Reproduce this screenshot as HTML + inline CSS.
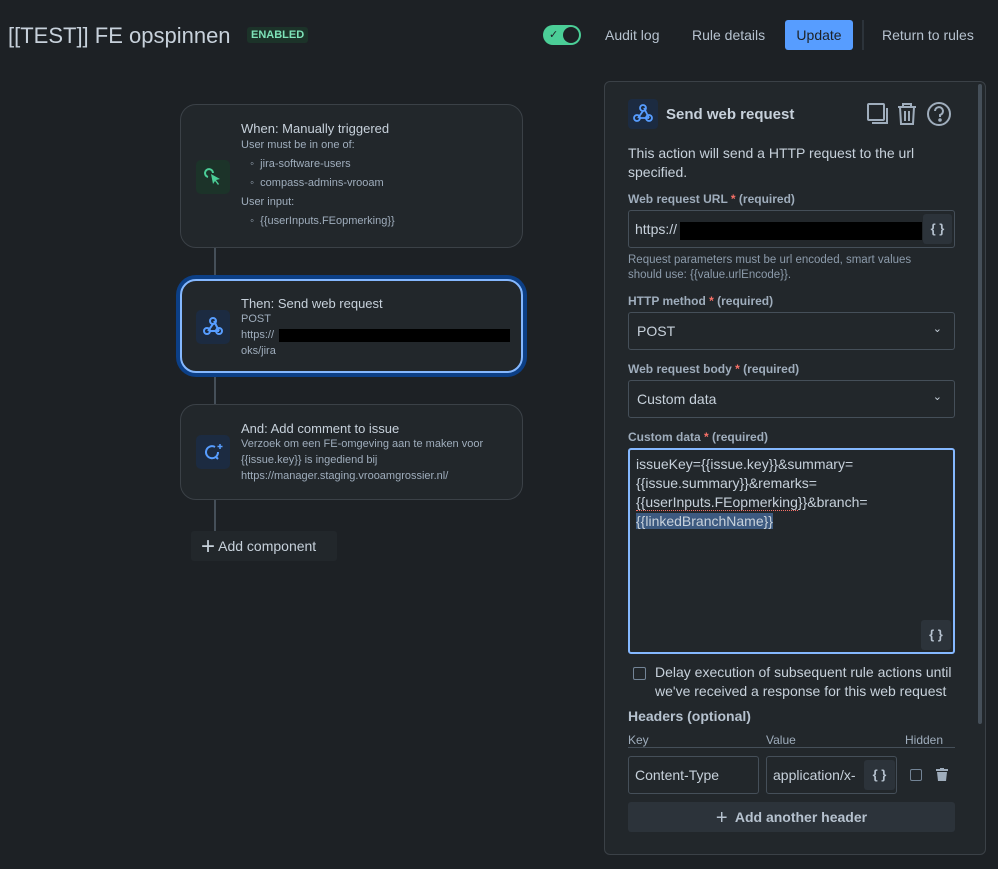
<!DOCTYPE html>
<html><head><meta charset="utf-8"><style>
*{box-sizing:border-box;margin:0;padding:0}
body{width:998px;height:869px;background:#1d2125;font-family:"Liberation Sans",sans-serif;color:#b6c2cf;position:relative;overflow:hidden}
.a{position:absolute}
.t{font-size:13px;color:#b6c2cf}
.card{position:absolute;left:180px;width:343px;border:1px solid #3b4147;border-radius:16px;background:#22272b}
.ic{position:absolute;width:34px;height:34px;border-radius:5px}
.ct{position:absolute;left:60px;font-size:13px;color:#c7d1db}
.sm{font-size:11px;color:#9fadbc;line-height:19px}
.lbl{position:absolute;left:628px;font-size:12px;font-weight:bold;color:#9fadbc}
.lbl i{color:#f87168;font-style:normal}
.inp{position:absolute;border:1px solid #454f59;border-radius:3px;background:#22272b;font-size:14px;color:#c7d1db}
.br{position:absolute;background:#2c333a;border-radius:3px;color:#b6c2cf;font-size:13px;font-weight:bold;text-align:center}
</style></head><body>
<div class="a" style="left:8px;top:23px;font-size:22px;color:#c7d1db">[[TEST]] FE opspinnen</div>
<div class="a" style="left:247px;top:27px;height:16px;padding:0 4px;background:#1c3329;border-radius:3px;color:#7ee2b8;font-size:11px;font-weight:bold;line-height:16px">ENABLED</div>
<div class="a" style="left:543px;top:25px;width:38px;height:20px;border-radius:10px;background:#4bce97"><div class="a" style="left:20px;top:2px;width:16px;height:16px;border-radius:8px;background:#1d2125"></div><div class="a" style="left:6px;top:3px;font-size:11px;color:#1d2125">✓</div></div>
<div class="a t" style="left:605px;top:27px;font-size:14px;color:#b6c2cf">Audit log</div>
<div class="a t" style="left:692px;top:27px;font-size:14px">Rule details</div>
<div class="a" style="left:785px;top:20px;width:68px;height:30px;background:#579dff;border-radius:3px;color:#1d2125;font-size:14px;text-align:center;line-height:30px">Update</div>
<div class="a" style="left:862px;top:20px;width:2px;height:30px;background:#2c333a"></div>
<div class="a t" style="left:882px;top:27px;font-size:14px">Return to rules</div>

<div class="a" style="left:214px;top:248px;width:2px;height:284px;background:#454f59"></div>
<div class="card" style="top:104px;height:144px">
<div class="ic" style="left:15px;top:55px;background:#1c3329"><svg width="34" height="34" viewBox="0 0 34 34"><path d="M12 17a4 4 0 1 1 5-4" stroke="#4bce97" stroke-width="2" fill="none"/><path d="M15 14l9 5-4 1 3 4-1 1-3-4-2 3z" fill="#4bce97"/></svg></div>
<div class="ct" style="top:16px">When: Manually triggered</div>
<div class="ct sm" style="top:31px">User must be in one of:<br>&nbsp;&nbsp;&nbsp;◦&nbsp;&nbsp;jira-software-users<br>&nbsp;&nbsp;&nbsp;◦&nbsp;&nbsp;compass-admins-vrooam<br>User input:<br>&nbsp;&nbsp;&nbsp;◦&nbsp;&nbsp;{{userInputs.FEopmerking}}</div>
</div>
<div class="card" style="top:279px;height:94px;border:2px solid #85b8ff;box-shadow:0 0 0 4px #0c3f86"><div class="ic" style="left:14px;top:29px;background:#1c2b41"><svg width="34" height="34" viewBox="0 0 34 34" fill="none" stroke="#579dff" stroke-width="2"><circle cx="17" cy="11" r="3"/><circle cx="11" cy="21" r="3"/><circle cx="23" cy="21" r="3"/><path d="M17 14l-5 7M14 21h9M18 11l5 10"/></svg></div>
<div class="ct" style="top:15px;left:59px">Then: Send web request</div>
<div class="ct sm" style="top:30px;left:59px;line-height:16px">POST<br>https://<br>oks/jira</div>
<div class="a" style="left:97px;top:48px;width:231px;height:13px;background:#000"></div></div>
<div class="card" style="top:404px;height:96px"><div class="ic" style="left:15px;top:30px;background:#1c2b41"><svg width="34" height="34" viewBox="0 0 34 34" fill="none" stroke="#579dff" stroke-width="2"><path d="M22 17a6 6 0 1 1-3-5M20 22l2 2"/><path d="M24 9v5M21.5 11.5h5" stroke-width="1.5"/></svg></div>
<div class="ct" style="top:16px">And: Add comment to issue</div>
<div class="ct sm" style="top:31px;line-height:16px">Verzoek om een FE-omgeving aan te maken voor<br>{{issue.key}} is ingediend bij<br>https://manager.staging.vrooamgrossier.nl/</div></div>
<div class="a" style="left:191px;top:531px;width:146px;height:30px;background:#22272b;border-radius:3px;font-size:14px;color:#c7d1db;line-height:30px;padding-left:10px"><span style="font-size:24px;vertical-align:-3px;font-weight:300">+</span> Add component</div>

<div class="a" style="left:604px;top:81px;width:382px;height:774px;border:1px solid #3b4147;border-radius:6px;background:#22272b"></div>
<div class="a" style="left:978px;top:84px;width:4px;height:640px;background:#454f59;border-radius:2px"></div>
<div class="a" style="left:628px;top:99px;width:30px;height:30px;background:#1c2b41;border-radius:4px"><svg width="30" height="30" viewBox="0 0 30 30" fill="none" stroke="#579dff" stroke-width="1.8"><circle cx="15" cy="9" r="3"/><circle cx="9" cy="19" r="3"/><circle cx="21" cy="19" r="3"/><path d="M15 12l-5 7M12 19h9M16 9l5 10"/></svg></div>
<div class="a" style="left:666px;top:106px;font-size:15px;font-weight:bold;color:#c7d1db">Send web request</div>
<svg class="a" style="left:866px;top:101px" width="90" height="26" fill="none" stroke="#9fadbc" stroke-width="2"><rect x="2" y="3" width="16" height="16" rx="1"/><path d="M6 22h15V7"/><path d="M32 6h18M37 6V3h8v3M34 6l1 17h12l1-17M39 10v10M43 10v10"/><circle cx="73" cy="13" r="11"/><path d="M69 10a4 4 0 1 1 5 4v2"/><circle cx="74" cy="19" r=".8" fill="#9fadbc"/></svg>
<div class="a" style="left:628px;top:144px;font-size:14px;line-height:19px;color:#c7d1db;width:320px">This action will send a HTTP request to the url specified.</div>
<div class="lbl" style="top:192px">Web request URL <i>*</i> (required)</div>
<div class="inp" style="left:628px;top:210px;width:327px;height:38px;padding:10px 6px">https://</div>
<div class="a" style="left:680px;top:222px;width:242px;height:18px;background:#000"></div>
<div class="br" style="left:923px;top:214px;width:29px;height:30px;line-height:30px">{ }</div>
<div class="a" style="left:628px;top:253px;font-size:11.5px;line-height:15px;color:#8c9bab;width:310px">Request parameters must be url encoded, smart values should use: {{value.urlEncode}}.</div>
<div class="lbl" style="top:294px">HTTP method <i>*</i> (required)</div>
<div class="inp" style="left:628px;top:312px;width:327px;height:38px;padding:10px 8px">POST<span style="position:absolute;right:12px;top:9px;font-size:11px">⌄</span></div>
<div class="lbl" style="top:362px">Web request body <i>*</i> (required)</div>
<div class="inp" style="left:628px;top:380px;width:327px;height:38px;padding:10px 8px">Custom data<span style="position:absolute;right:12px;top:9px;font-size:11px">⌄</span></div>
<div class="lbl" style="top:430px">Custom data <i>*</i> (required)</div>
<div class="inp" style="left:628px;top:448px;width:327px;height:206px;border:2px solid #85b8ff;padding:5px 6px;line-height:19px">issueKey={{issue.key}}&amp;summary=<br>{{issue.summary}}&amp;remarks=<br><span style="border-bottom:1px dotted #f87168">{{userInputs.FEopmerking</span>}}&amp;branch=<br><span style="background:#3d5a80">{{linkedBranchName}}</span></div>
<div class="br" style="left:921px;top:620px;width:30px;height:30px;line-height:30px">{ }</div>
<div class="a" style="left:633px;top:667px;width:13px;height:13px;border:1.5px solid #738496;border-radius:2px"></div>
<div class="a" style="left:655px;top:663px;font-size:14px;line-height:19px;color:#c7d1db">Delay execution of subsequent rule actions until<br>we've received a response for this web request</div>
<div class="a" style="left:628px;top:708px;font-size:14px;font-weight:bold;color:#b6c2cf">Headers (optional)</div>
<div class="a" style="left:628px;top:733px;font-size:12px;color:#9fadbc">Key</div>
<div class="a" style="left:766px;top:733px;font-size:12px;color:#9fadbc">Value</div>
<div class="a" style="left:905px;top:733px;font-size:12px;color:#9fadbc">Hidden</div>
<div class="a" style="left:628px;top:747px;width:327px;height:1px;background:#454f59"></div>
<div class="inp" style="left:628px;top:756px;width:131px;height:38px;padding:10px 6px">Content-Type</div>
<div class="inp" style="left:766px;top:756px;width:131px;height:38px;padding:10px 6px;overflow:hidden">application/x-</div>
<div class="br" style="left:864px;top:760px;width:31px;height:30px;line-height:30px">{ }</div>
<div class="a" style="left:910px;top:769px;width:12px;height:12px;border:1.5px solid #738496;border-radius:2px"></div>
<svg class="a" style="left:936px;top:768px" width="12" height="13" fill="#9fadbc"><rect x="0" y="1" width="12" height="2"/><rect x="4" y="0" width="4" height="2"/><path d="M1 4h10l-1 9H2z"/></svg>
<div class="a" style="left:628px;top:802px;width:327px;height:30px;background:#2c333a;border-radius:3px;font-size:14px;font-weight:bold;color:#b6c2cf;text-align:center;line-height:30px"><span style="font-size:20px;font-weight:normal;vertical-align:-2px">+</span>&nbsp; Add another header</div>
</body></html>
